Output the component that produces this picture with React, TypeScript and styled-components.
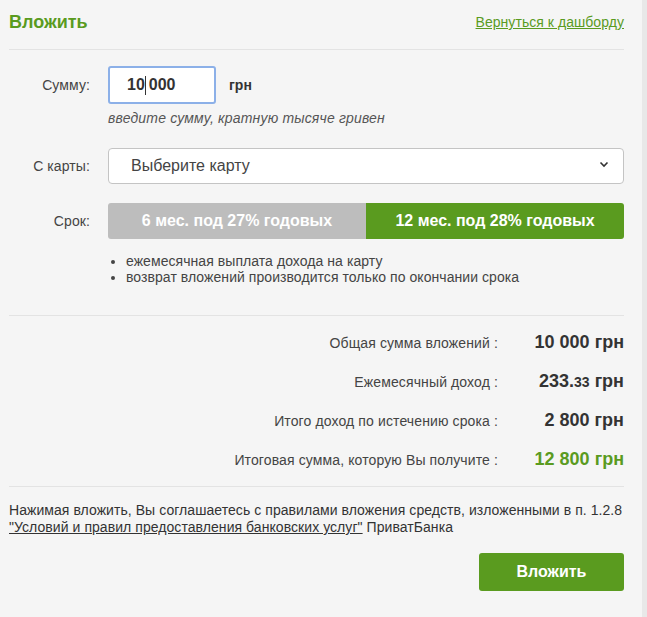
import React from "react";
import styled, { createGlobalStyle } from "styled-components";

const Global = createGlobalStyle`
  html, body { margin: 0; padding: 0; height: 100%; background: #e9e9e9; }
  #root { height: 100%; }
  * { box-sizing: border-box; }
`;
const Page = styled.div`
  width: 647px; height: 617px; display: flex; overflow: hidden;
  font-family: "Liberation Sans", Arial, sans-serif; color: #333; font-size: 14px;
`;
const Panel = styled.main`
  width: 642px; height: 617px; background: #f5f5f5; padding: 0 18px 0 9px;
`;
const Strip = styled.div`
  flex: 1; background: #e8e8e8;
`;
const Header = styled.header`
  height: 50px; display: flex; justify-content: space-between; align-items: flex-start;
  border-bottom: 1px solid #e3e3e3; padding-top: 12px;
`;
const Title = styled.h1`
  margin: 0; font-size: 18px; line-height: 21px; font-weight: 700; color: #5a9b1f;
`;
const BackLink = styled.a`
  font-size: 14px; line-height: 20px; color: #5a9b1f; text-decoration: underline; letter-spacing: 0.05px;
`;
const Row = styled.div<{ $mt: number; $h: number }>`
  display: flex; align-items: center; margin-top: ${p => p.$mt}px; height: ${p => p.$h}px;
`;
const Label = styled.label`
  width: 81px; margin-right: 18px; text-align: right; font-size: 14px; color: #444; flex: none; letter-spacing: 0.1px;
`;
const AmountBox = styled.div`
  width: 108px; height: 38px; background: #fff; border: 2px solid #8cb0e8; border-radius: 3px;
  display: flex; align-items: center; padding-left: 17px; font-size: 16px; font-weight: 700; color: #333;
`;
const Caret = styled.span`
  display: inline-block; width: 1px; height: 19px; background: #333; margin: 0 3px 0 0;
`;
const Unit = styled.span`
  margin-left: 13px; font-size: 14px; font-weight: 700; color: #333;
`;
const Hint = styled.div`
  margin: 4px 0 0 99px; font-size: 14px; line-height: 20px; font-style: italic; color: #555; letter-spacing: 0.17px;
`;
const Select = styled.div`
  flex: 1; height: 36px; background: #fff; border: 1px solid #c4c4c4; border-radius: 4px;
  display: flex; align-items: center; justify-content: space-between; padding: 0 14px 0 22px;
  font-size: 16px; color: #444;
`;
const Chevron = styled.svg`
  margin-top: -4px;
`;
const Segments = styled.div`
  flex: 1; display: flex; height: 36px; border-radius: 3px; overflow: hidden;
`;
const Segment = styled.div<{ $active?: boolean }>`
  flex: ${p => (p.$active ? "0 0 258px" : "1")}; display: flex; align-items: center; justify-content: center;
  font-size: 16px; font-weight: 700; color: #fff; background: ${p => (p.$active ? "#5a9b1f" : "#bdbdbd")};
`;
const Notes = styled.ul`
  margin: 14px 0 0 99px; padding: 0 0 0 18px; font-size: 14px; line-height: 16px; color: #444; letter-spacing: 0.06px;
`;
const Rule = styled.hr<{ $mt: number }>`
  margin: ${p => p.$mt}px 0 0; border: 0; border-top: 1px solid #e3e3e3;
`;
const Summary = styled.div`
  margin-top: 7px; display: flex; flex-direction: column;
`;
const SummaryRow = styled.div`
  height: 39px; display: flex; align-items: center; justify-content: flex-end;
`;
const SummaryLabel = styled.span`
  font-size: 14px; color: #444; letter-spacing: 0.12px;
`;
const SummaryValue = styled.span<{ $green?: boolean }>`
  width: 126px; text-align: right; font-size: 18px; font-weight: 700; color: ${p => (p.$green ? "#5a9b1f" : "#333")};
`;
const Cents = styled.span`
  font-size: 14px;
`;
const Legal = styled.p`
  margin: 15px 0 0; font-size: 14px; line-height: 17px; color: #333; letter-spacing: 0.06px;
`;
const LegalLink = styled.a`
  color: #333; text-decoration: underline;
`;
const Actions = styled.div`
  margin-top: 17px; display: flex; justify-content: flex-end;
`;
const Submit = styled.button`
  width: 145px; height: 38px; border: 0; border-radius: 3px; background: #5a9b1f; color: #fff;
  font: 700 16px "Liberation Sans", Arial, sans-serif;
`;

export default function App() {
  return (
    <Page>
      <Global />
      <Panel>
        <Header>
          <Title>Вложить</Title>
          <BackLink>Вернуться к дашборду</BackLink>
        </Header>
        <Row $mt={16} $h={38}>
          <Label>Сумму:</Label>
          <AmountBox>10<Caret />000</AmountBox>
          <Unit>грн</Unit>
        </Row>
        <Hint>введите сумму, кратную тысяче гривен</Hint>
        <Row $mt={20} $h={36}>
          <Label>С карты:</Label>
          <Select>
            Выберите карту
            <Chevron width="10" height="7" viewBox="0 0 10 7" fill="none">
              <path d="M1.5 1.5 5 5l3.5-3.5" stroke="#333" strokeWidth="1.6" />
            </Chevron>
          </Select>
        </Row>
        <Row $mt={19} $h={36}>
          <Label>Срок:</Label>
          <Segments>
            <Segment>6 мес. под 27% годовых</Segment>
            <Segment $active>12 мес. под 28% годовых</Segment>
          </Segments>
        </Row>
        <Notes>
          <li>ежемесячная выплата дохода на карту</li>
          <li>возврат вложений производится только по окончании срока</li>
        </Notes>
        <Rule $mt={30} />
        <Summary>
          <SummaryRow><SummaryLabel>Общая сумма вложений :</SummaryLabel><SummaryValue>10 000 грн</SummaryValue></SummaryRow>
          <SummaryRow><SummaryLabel>Ежемесячный доход :</SummaryLabel><SummaryValue>233.<Cents>33</Cents> грн</SummaryValue></SummaryRow>
          <SummaryRow><SummaryLabel>Итого доход по истечению срока :</SummaryLabel><SummaryValue>2 800 грн</SummaryValue></SummaryRow>
          <SummaryRow><SummaryLabel>Итоговая сумма, которую Вы получите :</SummaryLabel><SummaryValue $green>12 800 грн</SummaryValue></SummaryRow>
        </Summary>
        <Rule $mt={7} />
        <Legal>
          Нажимая вложить, Вы соглашаетесь с правилами вложения средств, изложенными в п. 1.2.8<br />
          <LegalLink>"Условий и правил предоставления банковских услуг"</LegalLink> ПриватБанка
        </Legal>
        <Actions><Submit>Вложить</Submit></Actions>
      </Panel>
      <Strip />
    </Page>
  );
}
